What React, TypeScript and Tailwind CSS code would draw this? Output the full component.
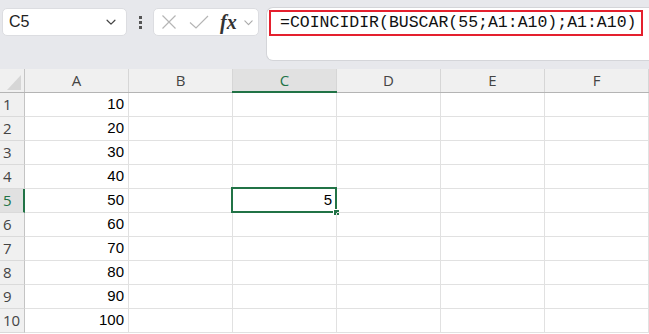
import React from "react";

const cols = ["A", "B", "C", "D", "E", "F"];
const values = [10, 20, 30, 40, 50, 60, 70, 80, 90, 100];

function ChevronDown({ className }: { className?: string }) {
  return (
    <svg viewBox="0 0 16 16" className={className} fill="none" stroke="currentColor" strokeWidth="1.4" strokeLinecap="round" strokeLinejoin="round">
      <path d="M3.5 6 L8 10.5 L12.5 6" />
    </svg>
  );
}

export default function App() {
  return (
    <div className="w-[649px] h-[334px] overflow-hidden bg-white" style={{ fontFamily: '"Open Sans", "Noto Sans", sans-serif' }}>
      {/* Top bar */}
      <div className="h-[69px] bg-[#e7e8ec] pt-[7px] flex items-start">
        <div className="ml-[2px] mt-[1px] w-[125px] h-[28px] bg-white rounded-[5px] border border-[#dcdde1] flex items-center pl-[6px] pr-[8px]">
          <span className="text-[16px] text-[#222] leading-none" style={{ fontFamily: '"Liberation Sans", sans-serif' }}>C5</span>
          <ChevronDown className="ml-auto w-[14px] h-[14px] text-[#444]" />
        </div>
        <div className="w-[26px] h-[28px] mt-[1px] flex flex-col items-center justify-center gap-[2px]">
          <div className="w-[3px] h-[3px] bg-[#555]" />
          <div className="w-[3px] h-[3px] bg-[#555]" />
          <div className="w-[3px] h-[3px] bg-[#555]" />
        </div>
        <div className="w-[106px] h-[28px] mt-[1px] bg-white rounded-[5px] border border-[#dcdde1] flex items-center">
          <svg viewBox="0 0 16 16" className="ml-[7px] w-[16px] h-[16px] text-[#b5b5b5]" fill="none" stroke="currentColor" strokeWidth="1.2">
            <path d="M1.5 1.5 L14.5 14.5 M14.5 1.5 L1.5 14.5" />
          </svg>
          <svg viewBox="0 0 20 16" className="ml-[12px] w-[20px] h-[16px] text-[#b5b5b5]" fill="none" stroke="currentColor" strokeWidth="1.2">
            <path d="M1 8.5 L7 14 L19 2" />
          </svg>
          <span className="ml-[11px] text-[20px] leading-none italic font-bold text-[#333]" style={{ fontFamily: '"Liberation Serif", serif' }}>fx</span>
          <ChevronDown className="ml-[5px] w-[13px] h-[13px] text-[#aaa]" />
        </div>
        <div className="ml-[7px] flex-1 h-[54px] bg-white rounded-l-[7px] border border-r-0 border-[#d4d5d9] pl-[2px] pt-[2px]">
          <div className="w-[374px] h-[26px] border-2 border-[#e4202e] flex items-center pl-[9px]">
            <span className="text-[16.5px] leading-none text-[#111] whitespace-nowrap" style={{ fontFamily: '"Liberation Mono", monospace' }}>
              =COINCIDIR(BUSCAR(55;A1:A10);A1:A10)
            </span>
          </div>
        </div>
      </div>

      {/* Header row */}
      <div className="flex h-[24px] bg-[#f0f0f0] border-b border-[#b4b4b4]">
        <div className="w-[25px] shrink-0 border-r border-[#c4c4c4] relative">
          <div
            className="absolute right-[3px] bottom-[2px] w-[14px] h-[15px] bg-[#d6d6d6]"
            style={{ clipPath: "polygon(100% 0, 100% 100%, 0 100%)" }}
          />
        </div>
        {cols.map((c) => {
          const sel = c === "C";
          return (
            <div
              key={c}
              className={
                sel
                  ? "w-[104px] shrink-0 bg-[#e1e1e1] border-r border-[#d6d6d6] flex items-center justify-center text-[15px] text-[#217346] relative"
                  : "w-[104px] shrink-0 border-r border-[#d6d6d6] flex items-center justify-center text-[15px] text-[#444]"
              }
            >
              {c}
              {sel && <div className="absolute left-[-1px] right-[-1px] bottom-[-1px] h-[2px] bg-[#217346]" />}
            </div>
          );
        })}
      </div>

      {/* Rows */}
      {values.map((v, i) => {
        const r = i + 1;
        const selRow = r === 5;
        return (
          <div key={r} className="flex h-[24px]">
            <div
              className={
                selRow
                  ? "w-[25px] shrink-0 bg-[#e1e1e1] border-r-2 border-r-[#217346] border-b border-b-[#dadada] flex items-center pl-[3px] text-[15px] text-[#217346]"
                  : "w-[25px] shrink-0 bg-[#f0f0f0] border-r border-r-[#c4c4c4] border-b border-b-[#dadada] flex items-center pl-[3px] text-[15px] text-[#444]"
              }
            >
              {r}
            </div>
            {cols.map((c) => {
              const isA = c === "A";
              const isSel = selRow && c === "C";
              return (
                <div
                  key={c}
                  className="w-[104px] shrink-0 border-r border-b border-[#e1e1e1] flex items-center justify-end pr-[4px] text-[15px] text-black relative"
                  style={{ fontFamily: '"Liberation Sans", sans-serif' }}
                >
                  {isA ? v : isSel ? 5 : ""}
                  {isSel && (
                    <>
                      <div className="absolute left-[-2px] top-[-2px] right-[-1px] bottom-[-1px] border-2 border-[#217346]" />
                      <div className="absolute right-[-4px] bottom-[-4px] w-[7px] h-[7px] bg-[#217346] border border-white" />
                    </>
                  )}
                </div>
              );
            })}
          </div>
        );
      })}
    </div>
  );
}
